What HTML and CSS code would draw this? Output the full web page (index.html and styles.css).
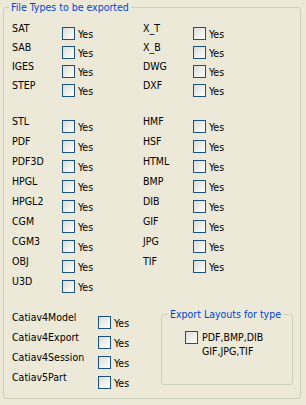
FILE: index.html
```html
<!DOCTYPE html>
<html lang="en">
<head>
    <meta charset="UTF-8">
    <meta name="viewport" content="width=device-width, initial-scale=1.0">
    <title>Export Options</title>
    <link rel="stylesheet" href="styles.css">
</head>
<body>
    <fieldset class="group main">
        <legend>File Types to be exported</legend>
        <div class="inner">
            <div class="grid g1">
                <span class="name">SAT</span><label class="opt"><input type="checkbox"><span class="yes">Yes</span></label>
                <span class="name">X_T</span><label class="opt"><input type="checkbox"><span class="yes">Yes</span></label>
                <span class="name">SAB</span><label class="opt"><input type="checkbox"><span class="yes">Yes</span></label>
                <span class="name">X_B</span><label class="opt"><input type="checkbox"><span class="yes">Yes</span></label>
                <span class="name">IGES</span><label class="opt"><input type="checkbox"><span class="yes">Yes</span></label>
                <span class="name">DWG</span><label class="opt"><input type="checkbox"><span class="yes">Yes</span></label>
                <span class="name">STEP</span><label class="opt"><input type="checkbox"><span class="yes">Yes</span></label>
                <span class="name">DXF</span><label class="opt"><input type="checkbox"><span class="yes">Yes</span></label>
            </div>

            <div class="grid g2">
                <span class="name">STL</span><label class="opt"><input type="checkbox"><span class="yes">Yes</span></label>
                <span class="name">HMF</span><label class="opt"><input type="checkbox"><span class="yes">Yes</span></label>
                <span class="name">PDF</span><label class="opt"><input type="checkbox"><span class="yes">Yes</span></label>
                <span class="name">HSF</span><label class="opt"><input type="checkbox"><span class="yes">Yes</span></label>
                <span class="name">PDF3D</span><label class="opt"><input type="checkbox"><span class="yes">Yes</span></label>
                <span class="name">HTML</span><label class="opt"><input type="checkbox"><span class="yes">Yes</span></label>
                <span class="name">HPGL</span><label class="opt"><input type="checkbox"><span class="yes">Yes</span></label>
                <span class="name">BMP</span><label class="opt"><input type="checkbox"><span class="yes">Yes</span></label>
                <span class="name">HPGL2</span><label class="opt"><input type="checkbox"><span class="yes">Yes</span></label>
                <span class="name">DIB</span><label class="opt"><input type="checkbox"><span class="yes">Yes</span></label>
                <span class="name">CGM</span><label class="opt"><input type="checkbox"><span class="yes">Yes</span></label>
                <span class="name">GIF</span><label class="opt"><input type="checkbox"><span class="yes">Yes</span></label>
                <span class="name">CGM3</span><label class="opt"><input type="checkbox"><span class="yes">Yes</span></label>
                <span class="name">JPG</span><label class="opt"><input type="checkbox"><span class="yes">Yes</span></label>
                <span class="name">OBJ</span><label class="opt"><input type="checkbox"><span class="yes">Yes</span></label>
                <span class="name">TIF</span><label class="opt"><input type="checkbox"><span class="yes">Yes</span></label>
                <span class="name">U3D</span><label class="opt"><input type="checkbox"><span class="yes">Yes</span></label>
            </div>

            <div class="catia">
                <div class="catia-list">
                    <span class="name">Catiav4Model</span><label class="opt"><input type="checkbox"><span class="yes">Yes</span></label>
                    <span class="name">Catiav4Export</span><label class="opt"><input type="checkbox"><span class="yes">Yes</span></label>
                    <span class="name">Catiav4Session</span><label class="opt"><input type="checkbox"><span class="yes">Yes</span></label>
                    <span class="name">Catiav5Part</span><label class="opt"><input type="checkbox"><span class="yes">Yes</span></label>
                </div>

                <fieldset class="group layouts">
                    <legend>Export Layouts for type</legend>
                    <label class="layout-opt">
                        <input type="checkbox">
                        <span>PDF,BMP,DIB<br>GIF,JPG,TIF</span>
                    </label>
                </fieldset>
            </div>
        </div>
    </fieldset>
</body>
</html>
```

FILE: styles.css
```css
body {
    margin: 0;
    padding: 1px 0 0 3px;
    background-color: #ece9d8;
    color: #000;
    font-family: "DejaVu Sans Condensed", "DejaVu Sans", sans-serif;
    font-size: 10.5px;
    line-height: 13px;
}

.group {
    margin: 0;
    padding: 0;
    border: 1px solid #d0d0bf;
    border-radius: 3px;
    box-sizing: border-box;
}

.group legend {
    margin-left: 5px;
    padding: 0 2px;
    color: #0046d5;
    line-height: 13px;
}

.main {
    width: 298px;
    height: 398px;
}

.inner {
    padding: 8px 0 0 8px;
}

.grid {
    display: grid;
    grid-template-columns: 50px 81px 50px 1fr;
}

.g1 {
    grid-auto-rows: 19px;
}

.g2 {
    grid-auto-rows: 20px;
    margin-top: 17px;
}

.opt {
    display: flex;
    align-items: flex-start;
    padding-top: 5px;
}

.yes {
    margin-left: 3px;
    margin-top: 1px;
}

input[type="checkbox"] {
    appearance: none;
    -webkit-appearance: none;
    width: 13px;
    height: 13px;
    margin: 0;
    flex-shrink: 0;
    border: 1px solid #1c5180;
    box-sizing: border-box;
    background: linear-gradient(135deg, #dcdcd7 0%, #f4f4f1 70%, #ffffff 100%);
}

.catia {
    display: flex;
    align-items: flex-start;
    margin-top: 16px;
}

.catia-list {
    width: 149px;
    display: grid;
    grid-template-columns: 86px 1fr;
    grid-auto-rows: 20px;
}

.layouts {
    width: 132px;
    height: 77px;
    margin-top: -3px;
}

.layouts legend {
    margin-left: 6px;
}

.layout-opt {
    display: flex;
    align-items: flex-start;
    padding: 10px 0 0 23px;
}

.layout-opt span {
    margin-left: 4px;
    margin-top: -1px;
    line-height: 14px;
}
```
